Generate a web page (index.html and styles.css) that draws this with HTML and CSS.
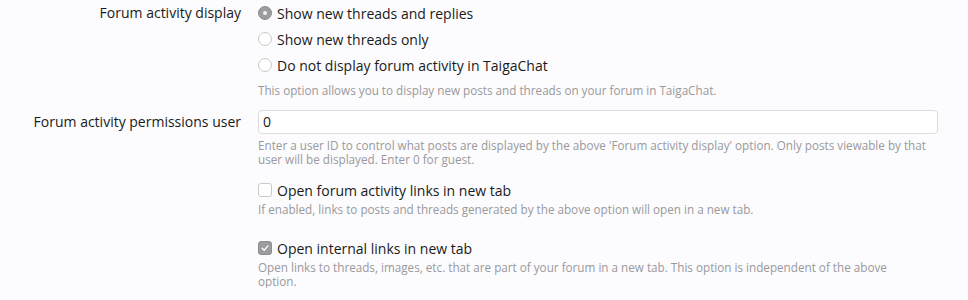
FILE: index.html
```html
<!DOCTYPE html>
<html>
<head>
<meta charset="utf-8">
<link rel="stylesheet" href="styles.css">
</head>
<body>
<form class="options">
  <div class="row row-display">
    <div class="label">Forum activity display</div>
    <div class="control">
      <ul class="choices">
        <li class="choice"><span class="radio is-on"></span><span>Show new threads and replies</span></li>
        <li class="choice"><span class="radio"></span><span>Show new threads only</span></li>
        <li class="choice"><span class="radio"></span><span>Do not display forum activity in TaigaChat</span></li>
      </ul>
      <p class="hint hint-display">This option allows you to display new posts and threads on your forum in TaigaChat.</p>
    </div>
  </div>

  <div class="row row-user">
    <div class="label label-input">Forum activity permissions user</div>
    <div class="control">
      <div class="textbox">0</div>
      <p class="hint hint-user">Enter a user ID to control what posts are displayed by the above 'Forum activity display' option. Only posts viewable by that user will be displayed. Enter 0 for guest.</p>
    </div>
  </div>

  <div class="row row-check1">
    <div class="label"></div>
    <div class="control">
      <div class="choice"><span class="check"></span><span>Open forum activity links in new tab</span></div>
      <p class="hint hint-check">If enabled, links to posts and threads generated by the above option will open in a new tab.</p>
    </div>
  </div>

  <div class="row row-check2">
    <div class="label"></div>
    <div class="control">
      <div class="choice"><span class="check is-on"><svg viewBox="0 0 14 14" width="14" height="14"><path d="M3.7 7.3 L6.1 9.7 L10.4 4.5" fill="none" stroke="#ffffff" stroke-width="1.6" stroke-linecap="round" stroke-linejoin="round"/></svg></span><span>Open internal links in new tab</span></div>
      <p class="hint hint-check hint-narrow">Open links to threads, images, etc. that are part of your forum in a new tab. This option is independent of the above option.</p>
    </div>
  </div>
</form>
</body>
</html>
```

FILE: styles.css
```css
html, body {
  margin: 0;
  padding: 0;
  background: #fcfcfe;
}
body {
  font-family: "Open Sans", "DejaVu Sans", sans-serif;
  color: #1a1a1a;
  font-size: 14px;
}
.options {
  display: flex;
  flex-direction: column;
}
.row {
  display: grid;
  grid-template-columns: 241px 680px;
  column-gap: 17px;
}
.label {
  text-align: right;
  line-height: 26px;
  white-space: nowrap;
}
.label-input {
  line-height: 24px;
}
.choices {
  list-style: none;
  margin: 0;
  padding: 0;
}
.choice {
  display: flex;
  align-items: center;
  height: 26px;
  gap: 5px;
  white-space: nowrap;
}
.radio {
  width: 14px;
  height: 14px;
  box-sizing: border-box;
  border-radius: 50%;
  border: 1px solid #c9c9cc;
  background: #ffffff;
  flex: none;
  display: flex;
  align-items: center;
  justify-content: center;
}
.radio.is-on {
  background: #9c9c9e;
  border-color: #8e8e90;
}
.radio.is-on::after {
  content: "";
  width: 4px;
  height: 4px;
  border-radius: 50%;
  background: #f2f2f2;
}
.check {
  width: 14px;
  height: 14px;
  box-sizing: border-box;
  border-radius: 3px;
  border: 1px solid #c9c9cc;
  background: #ffffff;
  flex: none;
  display: flex;
  align-items: center;
  justify-content: center;
}
.check.is-on {
  background: #9c9c9e;
  border-color: #8e8e90;
}
.check svg {
  display: block;
  width: 14px;
  height: 14px;
}
.hint {
  margin: 0;
  font-size: 11.7px;
  line-height: 14px;
  color: #99999b;
}
.hint-narrow {
  max-width: 660px;
}
.hint-display {
  margin-top: 5px;
}
.row-user {
  margin-top: 13px;
}
.textbox {
  height: 24px;
  box-sizing: border-box;
  border: 1px solid #dcdcde;
  border-radius: 4px;
  background: #ffffff;
  padding: 0 4px;
  line-height: 22px;
}
.hint-user {
  margin-top: 4px;
}
.row-check1 {
  margin-top: 11px;
}
.hint-check {
  margin-top: -1px;
}
.row-check2 {
  margin-top: 19px;
}
```
